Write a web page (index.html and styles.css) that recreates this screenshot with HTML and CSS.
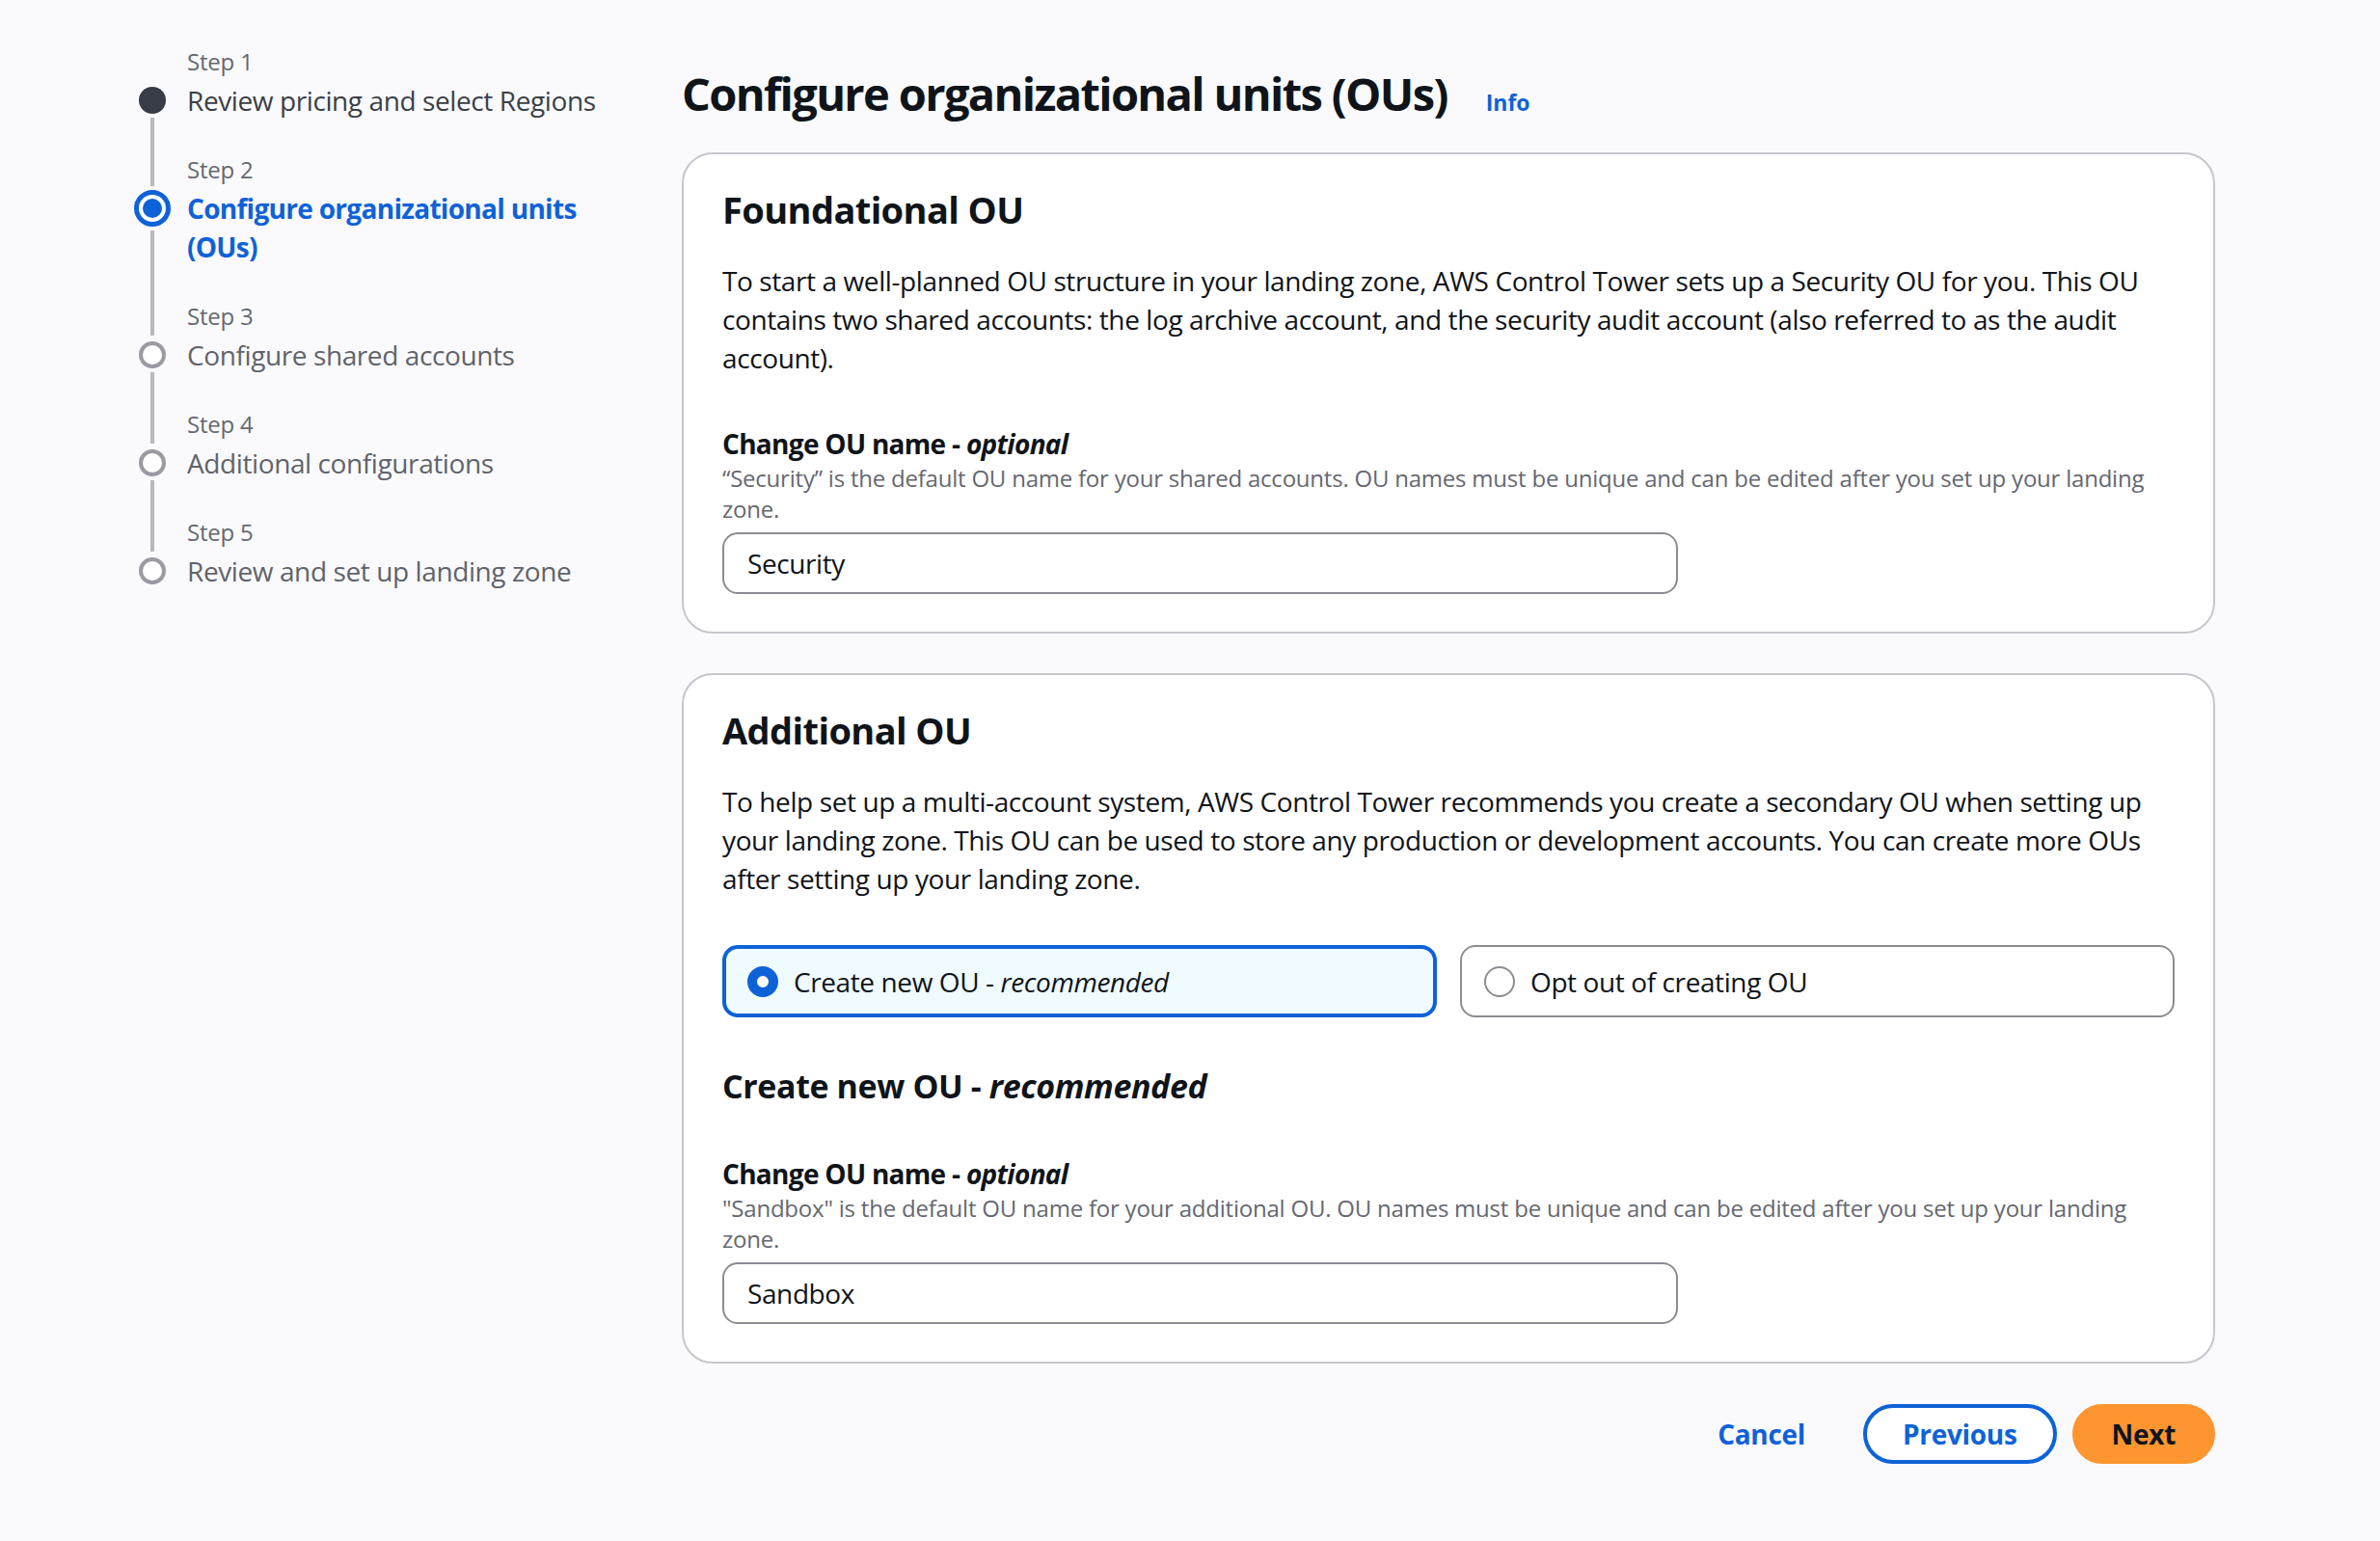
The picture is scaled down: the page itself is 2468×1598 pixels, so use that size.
FILE: index.html
```html
<!DOCTYPE html>
<html lang="en">
<head>
<meta charset="utf-8">
<title>Configure organizational units (OUs)</title>
<link rel="stylesheet" href="styles.css">
</head>
<body>
<div class="page">
  <nav class="steps">
    <div class="step">
      <div class="rail rail-top rail-none"></div>
      <div class="step-label">Step 1</div>
      <div class="marker"><span class="dot dot-done"></span><span class="rail rail-fill"></span></div>
      <div class="step-title step-title-done">Review pricing and select Regions</div>
    </div>
    <div class="step">
      <div class="rail rail-top"></div>
      <div class="step-label">Step 2</div>
      <div class="marker"><span class="dot dot-active"><span class="dot-inner"></span></span><span class="rail rail-fill"></span></div>
      <div class="step-title step-title-active">Configure organizational units (OUs)</div>
    </div>
    <div class="step">
      <div class="rail rail-top"></div>
      <div class="step-label">Step 3</div>
      <div class="marker"><span class="dot dot-todo"></span><span class="rail rail-fill"></span></div>
      <div class="step-title">Configure shared accounts</div>
    </div>
    <div class="step">
      <div class="rail rail-top"></div>
      <div class="step-label">Step 4</div>
      <div class="marker"><span class="dot dot-todo"></span><span class="rail rail-fill"></span></div>
      <div class="step-title">Additional configurations</div>
    </div>
    <div class="step step-last">
      <div class="rail rail-top"></div>
      <div class="step-label">Step 5</div>
      <div class="marker"><span class="dot dot-todo"></span></div>
      <div class="step-title">Review and set up landing zone</div>
    </div>
  </nav>

  <main class="main">
    <div class="page-header">
      <h1 class="page-title">Configure organizational units (OUs)</h1>
      <a class="info-link" href="#">Info</a>
    </div>

    <section class="card">
      <h2 class="card-title">Foundational OU</h2>
      <p class="card-text">To start a well-planned OU structure in your landing zone, AWS Control Tower sets up a Security OU for you. This OU contains two shared accounts: the log archive account, and the security audit account (also referred to as the audit account).</p>
      <div class="field">
        <div class="field-label">Change OU name - <i>optional</i></div>
        <div class="field-desc">“Security” is the default OU name for your shared accounts. OU names must be unique and can be edited after you set up your landing zone.</div>
        <div class="input">Security</div>
      </div>
    </section>

    <section class="card">
      <h2 class="card-title">Additional OU</h2>
      <p class="card-text">To help set up a multi-account system, AWS Control Tower recommends you create a secondary OU when setting up your landing zone. This OU can be used to store any production or development accounts. You can create more OUs after setting up your landing zone.</p>
      <div class="tiles">
        <div class="tile tile-selected"><span class="radio radio-on"></span><span>Create new OU - <i>recommended</i></span></div>
        <div class="tile"><span class="radio"></span><span>Opt out of creating OU</span></div>
      </div>
      <h3 class="sub-title">Create new OU - <i>recommended</i></h3>
      <div class="field">
        <div class="field-label">Change OU name - <i>optional</i></div>
        <div class="field-desc">"Sandbox" is the default OU name for your additional OU. OU names must be unique and can be edited after you set up your landing zone.</div>
        <div class="input">Sandbox</div>
      </div>
    </section>

    <div class="actions">
      <button class="btn btn-link">Cancel</button>
      <button class="btn btn-normal">Previous</button>
      <button class="btn btn-primary">Next</button>
    </div>
  </main>
</div>
</body>
</html>
```

FILE: styles.css
```css
* { box-sizing: border-box; }

body {
  margin: 0;
  background: #fafafc;
  font-family: "Open Sans", "Noto Sans", sans-serif;
  color: #0f141a;
  font-size: 28px;
  line-height: 40px;
  letter-spacing: -0.4px;
}

.page {
  display: flex;
  padding: 48px 0 60px 138px;
  gap: 52px;
}

/* ---------- steps ---------- */
.steps {
  width: 517px;
  flex: none;
  display: flex;
  flex-direction: column;
}

.step {
  display: grid;
  grid-template-columns: 40px 1fr;
  column-gap: 16px;
}

.step-label {
  font-size: 24px;
  line-height: 32px;
  color: #656871;
  margin-bottom: 4px;
  letter-spacing: -0.2px;
}

.step-title {
  padding-bottom: 36px;
  color: #5f636c;
}
.step-last .step-title { padding-bottom: 0; }
.step-title-done { color: #3b3f47; }
.step-title-active { color: #0e62d8; font-weight: 700; letter-spacing: -0.7px; }

.rail {
  display: block;
  width: 4px;
  background: #b8b8bf;
  justify-self: center;
}
.rail-top { height: 100%; margin-bottom: -4px; }
.rail-none { background: transparent; }
.rail-fill { flex: 1; margin-top: 0; }

.marker {
  display: flex;
  flex-direction: column;
  align-items: center;
}

.dot {
  display: block;
  flex: none;
  width: 28px;
  height: 28px;
  border-radius: 50%;
  margin: 6px 0 4px;
  box-shadow: 0 0 0 4px #fafafc;
  position: relative;
}
.dot-done { background: #383c45; }
.dot-todo { border: 4px solid #9a9aa2; background: #fff; }
.dot-active {
  width: 38px;
  height: 38px;
  margin: 1px 0 4px;
  border: 5px solid #0e62d8;
  background: #fff;
  display: flex;
  align-items: center;
  justify-content: center;
}
.dot-inner {
  width: 20px;
  height: 20px;
  border-radius: 50%;
  background: #0e62d8;
}

/* ---------- main ---------- */
.main {
  width: 1590px;
  flex: none;
  display: flex;
  flex-direction: column;
}

.page-header {
  display: flex;
  align-items: baseline;
  gap: 40px;
  margin-top: 19px;
  margin-bottom: 31px;
}

.page-title {
  margin: 0;
  font-size: 47px;
  line-height: 60px;
  font-weight: 700;
  letter-spacing: -1.65px;
}

.info-link {
  font-size: 23px;
  font-weight: 700;
  color: #0e62d8;
  text-decoration: none;
  letter-spacing: 0;
}

.card {
  background: #ffffff;
  border: 2px solid #c6c6cd;
  border-radius: 32px;
  padding: 35px 40px 39px;
  margin-bottom: 41px;
}

.card-title {
  margin: 0 0 32px;
  font-size: 38px;
  line-height: 44px;
  font-weight: 700;
  letter-spacing: -0.6px;
}

.card-text {
  margin: 0 0 49px;
}

.field-label {
  font-weight: 700;
  letter-spacing: -0.7px;
}

.field-desc {
  max-width: 1490px;
  font-size: 24px;
  line-height: 32px;
  color: #656871;
  letter-spacing: -0.22px;
  margin-bottom: 8px;
}

.input {
  width: 991px;
  height: 64px;
  border: 2px solid #8c8c94;
  border-radius: 16px;
  padding: 10px 24px;
  background: #fff;
}

.tiles {
  display: grid;
  grid-template-columns: 1fr 1fr;
  gap: 24px;
  margin-bottom: 50px;
}

.tile {
  display: flex;
  align-items: center;
  gap: 16px;
  height: 75px;
  border: 2px solid #8c8c94;
  border-radius: 16px;
  padding: 0 23px;
  background: #fff;
}
.tile-selected {
  border: 4px solid #0e62d8;
  background: #f0fbff;
  padding: 0 22px;
}

.radio {
  flex: none;
  width: 32px;
  height: 32px;
  border-radius: 50%;
  border: 2px solid #8c8c94;
  background: #fff;
}
.radio-on {
  border: 10px solid #0e62d8;
  background: #fff;
}

.sub-title {
  margin: 0 0 50px;
  font-size: 34px;
  line-height: 42px;
  font-weight: 700;
  letter-spacing: -0.4px;
}

.actions {
  display: flex;
  justify-content: flex-end;
  gap: 16px;
  margin-top: 1px;
}

.btn {
  font-family: inherit;
  font-size: 28px;
  font-weight: 700;
  letter-spacing: -0.3px;
  height: 62px;
  border-radius: 32px;
  border: 4px solid transparent;
  padding: 0 37px;
  cursor: pointer;
  background: transparent;
}
.btn-link { color: #0e62d8; padding: 0 40px; }
.btn-normal { border-color: #0e62d8; color: #0e62d8; background: #fff; }
.btn-primary { background: #fd9530; border-color: #fd9530; color: #0f141a; padding: 0 37px; }
```
